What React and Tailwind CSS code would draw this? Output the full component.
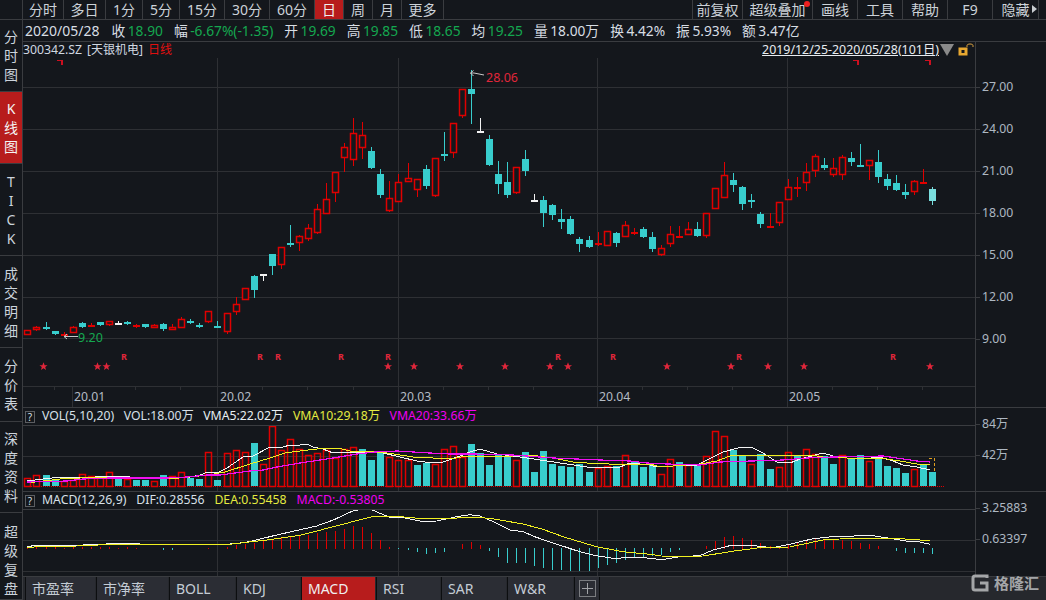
import React from "react";

const FONT = { fontFamily: '"Noto Sans","Noto Sans CJK SC",sans-serif' };
const cx = (i) => Math.round(27.4 + 9.05 * i);

// type, body top, body bottom, high, low (page pixel rows)
const K = [
["r",330,334,330,334],["r",327,329,326,330],["c",327,329,322,329],["c",331,334,331,334],["r",334,334,332,335],
["r",327,332,326,332],["c",323,327,322,327],["r",325,325,323,326],["c",322,325,322,325],["r",321,324,321,325],
["w",323,323,321,324],["c",322,322,321,324],["r",325,325,324,327],["c",324,327,324,327],["r",325,327,324,327],
["c",324,329,323,330],["r",327,329,324,329],["r",319,327,317,327],["c",321,321,319,323],["c",325,325,323,327],
["r",311,321,311,322],["c",326,326,321,326],["r",313,331,313,333],["r",304,311,297,314],["r",288,299,288,299],
["c",276,290,275,297],["w",274,274,274,280],["c",254,266,254,274],["r",247,264,247,268],["c",243,243,225,246],
["r",236,242,235,250],["r",228,238,224,240],["r",209,232,204,233],["r",199,213,183,213],["r",172,192,172,201],
["r",147,157,143,171],["r",133,159,118,165],["r",135,147,122,158],["c",151,168,147,168],["c",174,195,169,197],
["r",198,210,181,211],["r",182,201,174,201],["r",178,181,163,181],["r",179,189,179,196],["c",169,186,165,188],
["r",158,195,158,196],["c",154,154,132,160],["r",123,152,123,157],["r",89,115,89,117],["c",89,94,70,123],
["w",131,131,118,131],["c",139,165,135,165],["c",174,184,161,193],["c",182,195,162,197],["r",167,192,167,193],
["c",159,171,150,175],["w",200,200,194,200],["c",200,213,196,226],["c",205,215,204,219],["c",219,222,209,228],
["c",219,234,216,234],["c",239,244,237,251],["c",240,247,236,247],["r",243,243,232,245],["r",231,245,231,245],
["c",233,243,232,246],["r",225,236,221,236],["r",232,232,228,234],["c",229,237,227,237],["c",237,249,232,251],
["r",248,254,245,255],["r",234,243,226,246],["r",236,236,226,237],["r",229,234,222,234],["c",229,236,222,236],
["r",213,235,213,237],["r",188,208,188,208],["r",175,197,162,197],["c",180,185,173,191],["c",187,204,186,209],
["c",200,200,194,207],["c",214,224,212,227],["r",226,226,213,226],["r",202,222,202,225],["r",187,199,179,199],
["r",187,187,177,196],["r",172,182,163,190],["r",156,170,154,176],["c",165,168,158,169],["r",168,174,158,176],
["r",157,174,155,179],["c",158,162,152,165],["c",165,165,144,165],["r",160,165,160,179],["c",162,177,150,182],
["c",179,186,174,189],["c",183,190,175,190],["c",192,195,184,198],["r",181,191,180,194],["r",182,182,169,182],
["l",189,201,187,204],
];

// volume bar tops
const VOL = [
["r",478],["r",475],["c",475],["c",479],["r",481],["r",480],["r",474],["r",476],["r",477],["r",472],
["c",477],["r",479],["c",480],["c",480],["r",481],["c",475],["r",476],["r",472],["c",478],["c",479],
["r",452],["c",480],["r",453],["r",450],["r",452],["c",443],["r",464],["r",426],["r",450],["r",439],
["r",449],["r",455],["r",453],["r",450],["r",458],["r",449],["r",447],["c",449],["c",460],["c",452],
["r",457],["r",460],["r",460],["c",465],["c",463],["r",464],["r",449],["r",446],["r",457],["c",444],
["c",453],["c",465],["c",454],["c",456],["r",460],["c",452],["c",472],["c",451],["c",464],["c",466],
["c",467],["c",464],["c",472],["r",468],["r",466],["c",466],["r",455],["c",462],["c",467],["c",465],
["r",474],["r",459],["c",462],["r",465],["c",465],["r",456],["r",431],["r",436],["c",450],["c",455],
["r",464],["c",454],["c",469],["r",467],["r",452],["c",456],["r",449],["r",454],["c",456],["c",464],
["r",455],["c",458],["c",455],["r",461],["c",456],["c",466],["c",468],["c",473],["r",469],["c",465],["c",472],
];

const V_WHITE = "27,481 60,477 95,477 110,476 130,477 150,479 173,478 190,477 200,475 208,472 217,473 227,468 243,457 253,456 270,447 283,447 290,445 300,445 307,444 313,447 323,449 333,453 367,452 383,453 400,457 417,461 433,463 443,462 460,456 470,452 480,449 497,454 513,456 527,458 547,461 567,464 587,467 620,467 630,463 650,465 657,467 673,466 697,465 707,460 723,452 742,447 753,448 763,453 777,462 790,463 800,459 823,453 833,456 847,458 863,459 880,457 893,461 903,465 917,467 930,470";
const V_YEL = "27,483 60,479 100,477 125,477 140,479 180,478 208,475 225,472 250,464 270,458 285,453 300,451 317,449 338,448 350,451 375,452 387,453 413,457 433,458 450,459 467,456 513,456 530,455 553,458 573,462 587,463 630,465 650,464 657,466 673,466 700,464 717,461 730,456 753,455 783,455 810,455 823,457 847,458 880,458 900,461 917,464 930,465";
const V_MAG = "27,482 67,481 83,479 110,478 167,478 187,477 207,475 220,475 250,471 263,470 277,467 300,463 320,460 333,458 357,454 375,452 397,451 430,453 450,454 473,454 513,455 553,458 600,460 630,461 647,463 667,464 700,465 720,462 783,460 807,458 833,457 883,456 917,461 930,462";

// MACD: tops in row units of (y-400)*3
const M = {0:438,1:441,2:440,3:442,4:443,5:442,6:440,7:441,8:442,9:441,10:443,11:441,12:443,15:450,16:450,20:443,22:442,23:436,24:431,25:428,26:424,27:420,28:414,29:410,30:406,31:404,32:400,33:397,34:392,35:388,36:378,37:381,38:400,39:420,40:441,41:448,42:450,43:456,44:461,45:458,46:456,48:432,49:426,50:435,51:452,52:470,53:488,54:489,55:488,56:497,57:503,58:509,59:510,60:512,61:513,62:512,63:505,64:495,65:489,66:480,67:473,68:470,69:468,70:465,71:456,72:449,75:438,76:423,77:411,78:408,79:414,80:420,81:430,82:438,83:441,84:436,85:430,86:423,87:418,88:418,89:420,90:420,91:423,92:429,93:432,94:438,96:452,97:458,98:459,99:458,100:462};
const ML = (s) => s.split(" ").map((p) => { const [u, v] = p.split(",").map(Number); return `${(u / 3).toFixed(1)},${(400 + v / 3).toFixed(1)}`; }).join(" ");
const M_WHITE = ML("82,440 100,437 230,436 340,431 420,432 680,433 730,428 760,422 830,405 950,378 1000,360 1060,332 1090,328 1115,329 1140,340 1170,352 1210,353 1270,365 1310,363 1370,350 1410,344 1440,348 1480,365 1530,390 1569,395 1609,412 1669,432 1739,455 1789,467 1839,475 1919,472 1969,477 1999,477 2039,470 2099,467 2139,450 2189,437 2249,436 2299,441 2329,441 2369,433 2439,416 2509,409 2619,407 2669,415 2719,423 2759,426 2791,433");
const M_YEL = ML("82,443 110,440 230,438 340,433 420,433 690,433 730,428 800,420 900,406 1020,375 1120,349 1200,350 1270,356 1350,355 1420,352 1470,355 1569,372 1629,388 1689,410 1789,440 1869,455 1949,463 1999,470 2109,468 2209,452 2289,442 2369,441 2469,420 2569,414 2669,414 2791,422");

const VGRID = [217.5, 398.5, 597.5, 787.5];
const RED = "#e00000";
const CYAN = "#38cdcd";

function Grid({ y1, y2, rows }) {
  return (
    <g stroke="#2e3034" shapeRendering="crispEdges">
      {VGRID.map((x) => <line key={x} x1={x} x2={x} y1={y1} y2={y2} />)}
      {rows.map((y) => <line key={y} x1="23" x2="975" y1={y} y2={y} />)}
    </g>
  );
}

function Candle({ d, i }) {
  const [t, top, bot, hi, lo] = d;
  const x = cx(i);
  const col = t === "r" ? RED : t === "w" ? "#f2f2f2" : t === "l" ? "#7adede" : CYAN;
  const wick = <line x1={x + 0.5} x2={x + 0.5} y1={hi} y2={lo + 1} stroke={col} shapeRendering="crispEdges" />;
  if (top === bot) {
    return <g>{wick}<rect x={x - 3} y={top} width="7" height={t === "r" ? 2 : 1.5} fill={col} shapeRendering="crispEdges" /></g>;
  }
  return (
    <g>
      {wick}
      {t === "r"
        ? <rect x={x - 2.5} y={top + 0.5} width="6" height={bot - top} fill="#14171c" stroke={col} strokeWidth="1.5" />
        : <rect x={x - 3} y={top} width="7" height={bot - top} fill={col} shapeRendering="crispEdges" />}
    </g>
  );
}

const STARS = [43.5, 97.5, 106.5, 388, 414, 460, 505, 550, 568, 667, 731, 768, 804, 930];
const RS = [124, 260, 278, 341, 388, 558, 613, 739, 893];
const DATES = [["20.01", 74], ["20.02", 220], ["20.03", 400], ["20.04", 599], ["20.05", 789]];
const SMALLTICKS = [54.5, 135.5, 180.5, 262.5, 307.5, 353.5, 443.5, 488.5, 533.5, 642.5, 687.5, 732.5, 832.5, 877.5, 922.5];

function MainChart() {
  return (
    <svg viewBox="23 58 952 349" width="952" height="349" className="block">
      <Grid y1={58} y2={407} rows={[87.5, 129.5, 171.5, 213.5, 255.5, 297.5, 338.5, 386.5]} />
      <g stroke="#2e3034" shapeRendering="crispEdges">
        <line x1="72.5" x2="72.5" y1="386" y2="407" />
        {SMALLTICKS.map((x) => <line key={x} x1={x} x2={x} y1="386" y2="390" />)}
      </g>
      {[57, 853, 925].map((x) => (
        <path key={x} d={`M${x} 60.5H${x + 5}V65`} fill="none" stroke="#cc1020" strokeWidth="1.5" shapeRendering="crispEdges" />
      ))}
      {K.map((d, i) => <Candle key={i} d={d} i={i} />)}
      <path d="M484 75L474 73H470.5M473.5 70.5L470.5 73L473.5 76" fill="none" stroke="#c8c8c8" strokeWidth="1" />
      <text x="486" y="82" fontSize="12.5" fill="#e0263a">28.06</text>
      <path d="M78 336.5H64M67 334L64 336.5L67 339" fill="none" stroke="#c8c8c8" strokeWidth="1" />
      <text x="78" y="341.5" fontSize="12.5" fill="#14a850">9.20</text>
      {RS.map((x) => <text key={x} x={x} y="360" fontSize="9" fontWeight="700" textAnchor="middle" fill="#e0263a">R</text>)}
      {STARS.map((x) => (
        <polygon key={x} transform={`translate(${x} 366.5) scale(1.15)`} fill="#e0263a"
          points="0,-3.6 1,-1.1 3.5,-1.1 1.5,0.5 2.2,3 0,1.5 -2.2,3 -1.5,0.5 -3.5,-1.1 -1,-1.1" />
      ))}
      {DATES.map(([t, x]) => <text key={t} x={x} y="400.5" fontSize="12.25" fill="#b4bcc4">{t}</text>)}
    </svg>
  );
}

function VolChart() {
  return (
    <svg viewBox="23 426 952 65" width="952" height="65" className="block">
      <Grid y1={426} y2={491} rows={[456.5]} />
      {VOL.map(([t, top], i) => {
        const x = cx(i);
        return t === "r"
          ? <rect key={i} x={x - 2.5} y={top + 0.5} width="6" height={486 - top} fill="none" stroke={RED} strokeWidth="1.5" />
          : <rect key={i} x={x - 3} y={top} width="7" height={486 - top} fill={CYAN} shapeRendering="crispEdges" />;
      })}
      <line x1="27" x2="944" y1="486.5" y2="486.5" stroke={RED} strokeDasharray="1 1" shapeRendering="crispEdges" />
      <path d="M928.5 458H934V473" fill="none" stroke="#e0a020" strokeDasharray="3 2" shapeRendering="crispEdges" />
      <polyline points={V_WHITE} fill="none" stroke="#f4f4f4" shapeRendering="crispEdges" />
      <polyline points={V_YEL} fill="none" stroke="#f0f020" shapeRendering="crispEdges" />
      <polyline points={V_MAG} fill="none" stroke="#f010f0" strokeWidth="1.2" shapeRendering="crispEdges" />
    </svg>
  );
}

function MacdChart() {
  return (
    <svg viewBox="23 510 952 66" width="952" height="66" className="block">
      <Grid y1={510} y2={576} rows={[540.5, 571.5]} />
      {Object.entries(M).map(([k, v]) => {
        const x = cx(Number(k)) + 0.5;
        const y = 400 + v / 3;
        return y < 548.5
          ? <line key={k} x1={x} x2={x} y1={y} y2="549" stroke={RED} shapeRendering="crispEdges" />
          : <line key={k} x1={x} x2={x} y1="548" y2={y} stroke={CYAN} shapeRendering="crispEdges" />;
      })}
      <polyline points={M_WHITE} fill="none" stroke="#f4f4f4" shapeRendering="crispEdges" />
      <polyline points={M_YEL} fill="none" stroke="#f0f020" shapeRendering="crispEdges" />
    </svg>
  );
}

function AxisLabels({ labels, rowClass, firstPad }) {
  return (
    <div className={`flex flex-col w-[71px] ${firstPad}`}>
      {labels.map((l) => (
        <div key={l} className={`flex items-center ${rowClass}`}>
          <span className="w-[4px] h-px bg-[#3a3c40]" />
          <span className="ml-[2px] text-[12.25px] leading-none text-[#aeb8c2]">{l}</span>
        </div>
      ))}
    </div>
  );
}

function Tab({ w, active, children }) {
  return (
    <div className={`${w} h-full flex items-center justify-center border-r border-[#3a3c40] text-[14px] leading-none whitespace-nowrap ${active ? "bg-[#b71c1c] text-[#f0f0f0]" : "text-[#ccd2d8]"}`}>
      {children}
    </div>
  );
}

function SideItem({ h, active, pad, chars }) {
  return (
    <div className={`${h} ${pad || ""} flex flex-col items-center justify-center border-b border-[#3a3c40] ${active ? "bg-[#b71c1c] text-[#f4f4f4]" : "text-[#ccd4dc]"}`}>
      {chars.split("").map((c, i) => <span key={i} className="text-[14px] leading-[19px]">{c}</span>)}
    </div>
  );
}

function Stat({ k, v, cls }) {
  return (
    <div className="flex items-center gap-[2.5px] whitespace-nowrap">
      <span className="text-[#d8dee4]">{k}</span>
      <span className={cls}>{v}</span>
    </div>
  );
}

function Help() {
  return <span className="w-[10px] h-[12px] border border-[#5c5e62] flex items-center justify-center text-[10px] leading-none text-[#d8e0e8]">?</span>;
}

const BTABS = [["市盈率", "w-[70px]"], ["市净率", "w-[72px]"], ["BOLL", "w-[66px]"], ["KDJ", "w-[64px]"], ["MACD", "w-[74px]", true], ["RSI", "w-[64px]"], ["SAR", "w-[65px]"], ["W&R", "w-[66px]"]];

export default function App() {
  return (
    <div className="relative w-[1046px] h-[600px] overflow-hidden bg-[#14171c] flex flex-col" style={FONT}>
      {/* top toolbar */}
      <div className="h-[20px] shrink-0 flex border-b border-[#3a3c40]">
        <div className="w-[23px] border-r border-[#3a3c40]" />
        <Tab w="w-[41px]">分时</Tab>
        <Tab w="w-[42px]">多日</Tab>
        <Tab w="w-[37px]">1分</Tab>
        <Tab w="w-[37px]">5分</Tab>
        <Tab w="w-[45px]">15分</Tab>
        <Tab w="w-[45px]">30分</Tab>
        <Tab w="w-[45px]">60分</Tab>
        <Tab w="w-[29px]" active>日</Tab>
        <Tab w="w-[29px]">周</Tab>
        <Tab w="w-[29px]">月</Tab>
        <Tab w="w-[42px]">更多</Tab>
        <div className="ml-auto flex h-full border-l border-[#3a3c40]">
          <Tab w="w-[50px]">前复权</Tab>
          <div className="relative h-full">
            <Tab w="w-[70px]">超级叠加</Tab>
            <span className="absolute right-[3px] top-[1px] w-[6px] h-[6px] rounded-full bg-[#f02020]" />
          </div>
          <Tab w="w-[45px]">画线</Tab>
          <Tab w="w-[45px]">工具</Tab>
          <Tab w="w-[45px]">帮助</Tab>
          <Tab w="w-[45px]">F9</Tab>
          <div className="relative h-full">
            <Tab w="w-[46px]">隐藏</Tab>
            <span className="absolute right-[2px] top-[5px] border-y-[4px] border-l-[5px] border-y-transparent border-l-[#c8ccd0]" />
          </div>
          <div className="w-[7px]" />
        </div>
      </div>

      <div className="flex-1 flex min-h-0">
        {/* left rail */}
        <div className="w-[23px] shrink-0 flex flex-col border-r border-[#3a3c40]">
          <SideItem h="h-[72px]" chars="分时图" />
          <SideItem h="h-[72px]" active chars="K线图" />
          <SideItem h="h-[92px]" chars="TICK" />
          <SideItem h="h-[92px]" chars="成交明细" />
          <SideItem h="h-[74px]" chars="分价表" />
          <SideItem h="h-[91px]" chars="深度资料" />
          <SideItem h="flex-1" pad="pt-[7px]" chars="超级复盘" />
        </div>

        <div className="flex-1 flex flex-col min-w-0">
          {/* quote line */}
          <div className="h-[22px] shrink-0 flex items-center gap-[11px] pl-[2px] border-b border-[#3a3c40] text-[13.75px] leading-none">
            <span className="text-[14px] text-[#d8dee4] mr-[1px]">2020/05/28</span>
            <Stat k="收" v="18.90" cls="text-[#14a850]" />
            <Stat k="幅" v="-6.67%(-1.35)" cls="text-[#14a850]" />
            <Stat k="开" v="19.69" cls="text-[#14a850]" />
            <Stat k="高" v="19.85" cls="text-[#14a850]" />
            <Stat k="低" v="18.65" cls="text-[#14a850]" />
            <Stat k="均" v="19.25" cls="text-[#14a850]" />
            <Stat k="量" v="18.00万" cls="text-[#d8dee4]" />
            <Stat k="换" v="4.42%" cls="text-[#d8dee4]" />
            <Stat k="振" v="5.93%" cls="text-[#d8dee4]" />
            <Stat k="额" v="3.47亿" cls="text-[#d8dee4]" />
          </div>

          {/* main K-line pane */}
          <div className="h-[366px] shrink-0 flex border-b border-[#3a3c40]">
            <div className="w-[953px] border-r border-[#3a3c40] flex flex-col">
              <div className="h-[16px] flex items-center">
                <span className="text-[12.25px] leading-none text-[#d0d8e0] whitespace-nowrap">300342.SZ</span>
                <span className="ml-[5px] text-[12px] leading-none text-[#d0d8e0]">[天银机电]</span>
                <span className="ml-[5px] text-[12px] leading-none text-[#e01010]">日线</span>
                <span className="ml-auto text-[12.4px] leading-none text-[#e8ecf0] underline whitespace-nowrap">2019/12/25-2020/05/28(101日)</span>
                <span className="ml-[1px] w-0 h-0 border-x-[7px] border-t-[12px] border-x-transparent border-t-[#8a8a8a]" />
                <svg width="17" height="16" viewBox="0 0 17 16" className="ml-[4px]">
                  <rect x="0.5" y="5.5" width="9" height="8" fill="#e8a830" />
                  <rect x="3.5" y="8" width="3" height="3" fill="#14171c" />
                  <path d="M9 5V3.5C9 1.5 15 1.5 15 3.5V5" fill="none" stroke="#d8a040" strokeWidth="1" />
                </svg>
              </div>
              <MainChart />
            </div>
            <AxisLabels labels={["27.00", "24.00", "21.00", "18.00", "15.00", "12.00", "9.00"]} rowClass="h-[42px]" firstPad="pt-[24px]" />
          </div>

          {/* volume pane */}
          <div className="h-[84px] shrink-0 flex border-b border-[#3a3c40]">
            <div className="w-[953px] border-r border-[#3a3c40] flex flex-col">
              <div className="h-[18px] flex items-center gap-[9.5px] pl-[2px] border-b border-[#3a3c40] text-[12.25px] leading-none whitespace-nowrap">
                <div className="flex items-center gap-[7px]"><Help /><span className="text-[#d8e0e8]">VOL(5,10,20)</span></div>
                <span className="text-[#d8e0e8]">VOL:18.00万</span>
                <span className="text-[#e8f0f4]">VMA5:22.02万</span>
                <span className="text-[#e4ea40]">VMA10:29.18万</span>
                <span className="text-[#f000f0]">VMA20:33.66万</span>
              </div>
              <VolChart />
            </div>
            <AxisLabels labels={["84万", "42万"]} rowClass="h-[31px]" firstPad="pt-[1px]" />
          </div>

          {/* MACD pane */}
          <div className="h-[85px] shrink-0 flex border-b border-[#3a3c40]">
            <div className="w-[953px] border-r border-[#3a3c40] flex flex-col">
              <div className="h-[18px] flex items-center gap-[10px] pl-[2px] border-b border-[#3a3c40] text-[12.25px] leading-none whitespace-nowrap">
                <div className="flex items-center gap-[7px]"><Help /><span className="text-[#d8e0e8]">MACD(12,26,9)</span></div>
                <span className="text-[#d8e0e8]">DIF:0.28556</span>
                <span className="text-[#e4ea40]">DEA:0.55458</span>
                <span className="text-[#f000f0]">MACD:-0.53805</span>
              </div>
              <MacdChart />
            </div>
            <AxisLabels labels={["3.25883", "0.63397"]} rowClass="h-[31px]" firstPad="pt-[1px]" />
          </div>

          {/* indicator tabs */}
          <div className="flex-1 flex items-stretch gap-[1px] pl-[2px] bg-[#26282d]">
            {BTABS.map(([t, w, active]) => (
              <div key={t} className={`${w} flex items-center pl-[6px] text-[14px] leading-none border-l border-[#0c0e10] ${active ? "bg-[#b71c1c] text-[#f0f0f0]" : "bg-[#2b2d34] text-[#c4ccd4]"}`}>{t}</div>
            ))}
            <div className="w-[26px] flex items-center justify-center border-x border-[#0c0e10] bg-[#2b2d34]">
              <svg width="17" height="17" viewBox="0 0 17 17"><rect x="0.5" y="0.5" width="16" height="16" fill="none" stroke="#7a7c80" /><path d="M8.5 3V14M3 8.5H14" stroke="#a0a2a6" /></svg>
            </div>
          </div>
        </div>
      </div>

      {/* watermark */}
      <div className="absolute right-[7px] bottom-[8px] flex items-center gap-[5px] text-[#a4a6a8]">
        <svg width="18" height="18" viewBox="0 0 18 18">
          <path d="M16 4V2H4a2 2 0 0 0-2 2v10a2 2 0 0 0 2 2h12V9H9" fill="none" stroke="#a4a6a8" strokeWidth="3" />
        </svg>
        <span className="text-[15px] leading-none font-bold tracking-[0px]">格隆汇</span>
      </div>
    </div>
  );
}
